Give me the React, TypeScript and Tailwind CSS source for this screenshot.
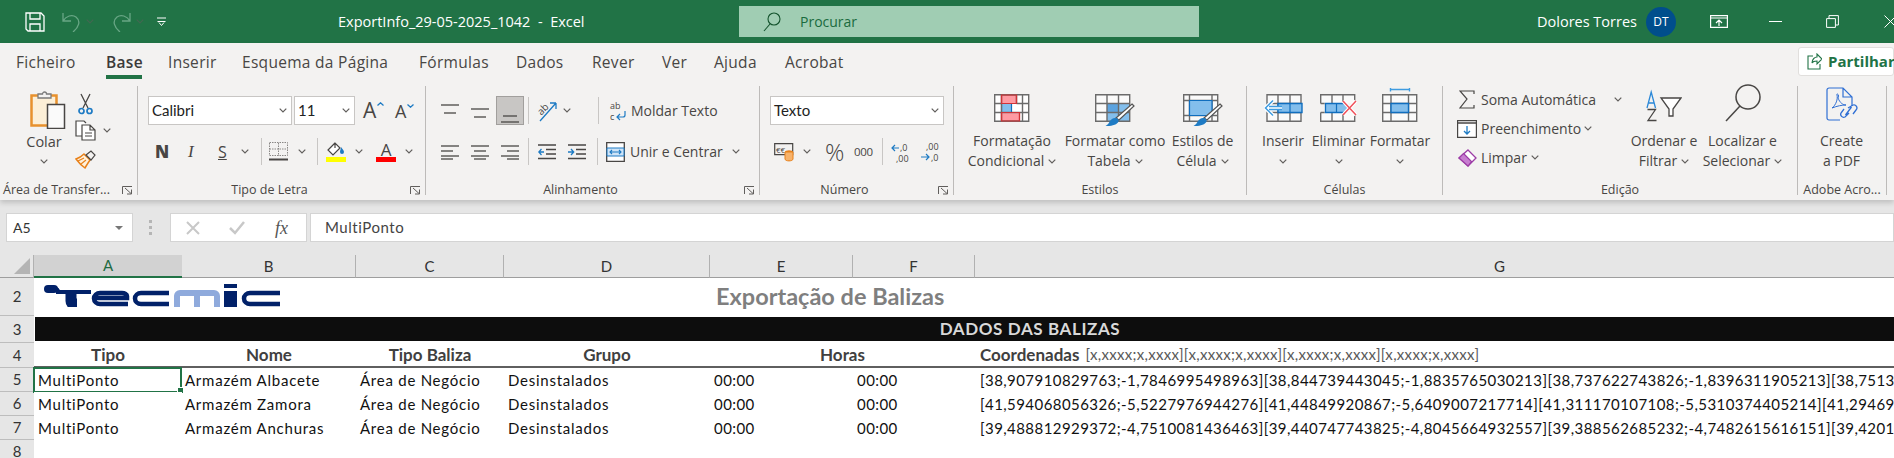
import React from 'react'

const Chev = ({ className = '' }: { className?: string }) => (
  <svg width="8" height="5" viewBox="0 0 8 5" className={`shrink-0 ${className}`}>
    <path d="M.7.7 4 4 7.3.7" fill="none" stroke="#605e5c" strokeWidth="1.2" />
  </svg>
)

const VSep = ({ className = '' }: { className?: string }) => <div className={`w-px h-[27px] bg-[#c8c6c4] shrink-0 ${className}`} />

const Launcher = () => (
  <svg width="11" height="9" viewBox="0 0 11 9">
    <path d="M.5 8V.5H10M3 2l6 5.500M9.500 3.500v4.500H5" fill="none" stroke="#605e5c" strokeWidth="1" />
  </svg>
)

function Group({ className, label, launcher, children }: { className: string; label: string; launcher?: boolean; children: React.ReactNode }) {
  return (
    <div className={`${className} shrink-0 h-[109px] border-r border-[#bdbbb9] flex flex-col`}>
      <div className="flex-1 min-h-0">{children}</div>
      <div className="flex items-center h-[15px] pt-[5px] text-[12.5px] text-[#484644] leading-none">
        <span className="flex-1 text-center whitespace-nowrap">{label}</span>
        {launcher && <span className="w-[24px] pl-[9px] flex"><Launcher /></span>}
      </div>
    </div>
  )
}

const Row = ({ className = '', children }: { className?: string; children: React.ReactNode }) => (
  <div className={`flex items-center h-[29px] ${className}`}>{children}</div>
)

function Combo({ className, text }: { className: string; text: string }) {
  return (
    <div className={`${className} h-[29px] shrink-0 bg-white border border-[#c8c6c4] flex items-center justify-between pl-[3px] pr-[4px] font-['Lato',sans-serif] text-[15px] text-[#222]`}>
      <span>{text}</span>
      <Chev />
    </div>
  )
}

function BigBtn({ className, icon, l1, l2, chevInline }: { className: string; icon: React.ReactNode; l1: string; l2?: string; chevInline?: boolean }) {
  return (
    <div className={`${className} shrink-0 flex flex-col items-center text-[14px] text-[#484644] whitespace-nowrap`}>
      <div className="h-[45px] pb-[9px] flex items-end justify-center">{icon}</div>
      <div className="h-[20px] leading-[20px]">{l1}</div>
      <div className="h-[20px] leading-[20px] flex items-center gap-[4px]">
        {l2}
        {chevInline && <Chev />}
      </div>
    </div>
  )
}

const lines = (ys: number[], cls: number[][], w = 18, stroke = '#484644') => (
  <svg width={w} height="16" viewBox={`0 0 ${w} 16`}>
    {ys.map((y, i) => (
      <path key={i} d={`M${cls[i][0]} ${y}H${cls[i][1]}`} stroke={stroke} strokeWidth="1.3" />
    ))}
  </svg>
)

const CF = () => (
  <svg width="36" height="28" viewBox="0 0 36 28">
    <path fill="#fff" d="M.7.7h34v26.6H.7z" />
    <path d="M7.5 1h15v8.5h-15zM7.5 18.5h18v8.5h-18z" fill="#ff9aa2" stroke="#d13438" strokeWidth="1.2" />
    <path d="M7.5 9.5h10v9h-10z" fill="#83beec" stroke="#106ebe" strokeWidth="1.2" />
    <path d="M.7.7h34v26.6H.7zM.7 9.5h7M.7 18.5h34M22.5 1v8M28.5 1v26M7.5 1v26M22.5 9.5h12" fill="none" stroke="#6b6b6b" strokeWidth="1.4" />
    <path d="M7.5 1h15v8.5h-15zM7.5 18.5h18v8.5h-18z" fill="none" stroke="#d13438" strokeWidth="1.2" />
  </svg>
)

const BrushOver = () => (
  <g>
    <path d="M37 10 39 12 24 26 21 24z" fill="#fff" stroke="#555" strokeWidth="1.2" />
    <path d="M20 24c3 0 4 2 3.500 3.500-1 3-7 5-13 4.500 3-1.500 3-3 4.500-5 1.500-2 3-3 5-3z" fill="#1e7bc4" />
  </g>
)

const TableStyle = () => (
  <svg width="40" height="33" viewBox="0 0 40 33" className="-mb-[5px]">
    <path fill="#fafafa" d="M.7.7h34v26.6H.7z" />
    <path d="M12 9.500h23V27.300H12z" fill="#83beec" />
    <path d="M12 9.500h11.500v9H12z" fill="#5ba3e0" />
    <path d="M.7.7h34v26.6H.7zM.7 9.500h34M.7 18.500h34M12 1v26M23.500 1v26" fill="none" stroke="#6b6b6b" strokeWidth="1.4" />
    <BrushOver />
  </svg>
)

const CellStyle = () => (
  <svg width="40" height="33" viewBox="0 0 40 33" className="-mb-[5px]">
    <path fill="#fafafa" d="M.7.7h34v26.6H.7z" />
    <path d="M.7.7h34v26.6H.7zM.7 6.500h34M.7 21.500h34M6.500 1v26M29 1v26" fill="none" stroke="#6b6b6b" strokeWidth="1.4" />
    <path d="M6.500 6.500H29v15H6.500z" fill="#83beec" stroke="#106ebe" strokeWidth="1.2" />
    <BrushOver />
  </svg>
)

const InsertIc = () => (
  <svg width="39" height="28" viewBox="0 0 39 28">
    <path fill="#fafafa" d="M3 .7h34v26.600H3z" />
    <path d="M3 .7h34v26.600H3zM14 1v26M26 1v26M3 9.500h34M3 18.500h34" fill="none" stroke="#6b6b6b" strokeWidth="1.4" />
    <path d="M14 9.500h24v9H14z" fill="#83beec" stroke="#106ebe" strokeWidth="1.400" />
    <path d="M26 9.500v9" stroke="#106ebe" strokeWidth="1.200" />
    <path d="M18 14H2M9 6.500 1.500 14 9 21.500" fill="none" stroke="#fff" strokeWidth="4" />
    <path d="M18 12.500H5M18 15.500H5M9 6.500 1.500 14 9 21.500" fill="none" stroke="#3e9be0" strokeWidth="1.500" />
  </svg>
)

const DeleteIc = () => (
  <svg width="38" height="28" viewBox="0 0 38 28">
    <path fill="#fafafa" d="M.7.7h34v8.800H.7zM.7 18.500h34v8.800H.7z" />
    <path d="M.7 9.500V.7h34v8.800M.7 18.500v8.800h34v-8.800M12 1v8M23 1v8M12 19v8M23 19v8M.7 9.500h4M.7 18.500h4" fill="none" stroke="#6b6b6b" strokeWidth="1.400" />
    <path d="M5.500 9.500h20l5 4.500-5 4.500h-20z" fill="#83beec" stroke="#106ebe" strokeWidth="1.300" />
    <path d="M16.500 9.500v9" stroke="#106ebe" strokeWidth="1.200" />
    <path d="M23 7 36 21M36 7 23 21" stroke="#fff" strokeWidth="3.500" />
    <path d="M23 7 36 21M36 7 23 21" stroke="#f0505a" strokeWidth="1.500" />
  </svg>
)

const FormatIc = () => (
  <svg width="36" height="34" viewBox="0 0 36 34">
    <path d="M8.500 1.500h19M8.500 0v3.500M27.500 0v3.500" fill="none" stroke="#3e9be0" strokeWidth="1.400" />
    <path fill="#fafafa" d="M.7 6.700h34v26.600H.7z" />
    <path d="M.7 6.700h34v26.600H.7zM.7 15.500h34M.7 24.500h34M9 7v26M26.500 7v26" fill="none" stroke="#6b6b6b" strokeWidth="1.400" />
    <path d="M9 15.500h17.500v9H9z" fill="#83beec" stroke="#106ebe" strokeWidth="1.400" />
  </svg>
)

const SortIc = () => (
  <svg width="36" height="34" viewBox="0 0 36 34">
    <path d="M1 20 5.200 4 9.500 20M2.500 15h6" fill="none" stroke="#2b88d8" strokeWidth="1.300" />
    <path d="M1.500 21.500h8L2 32.500h8.500" fill="none" stroke="#484644" strokeWidth="1.300" />
    <path d="M15 10h20l-8 11v7h-4v-7z" fill="#fff" stroke="#484644" strokeWidth="1.300" />
  </svg>
)

const FindIc = () => (
  <svg width="36" height="38" viewBox="0 0 36 38">
    <circle cx="23" cy="13" r="12" fill="none" stroke="#484644" strokeWidth="1.500" />
    <path d="M15 22 1 37" stroke="#484644" strokeWidth="1.500" />
  </svg>
)

const PdfIc = () => (
  <svg width="32" height="35" viewBox="0 0 32 35">
    <path d="M14 33H3a2 2 0 0 1-2-2V3a2 2 0 0 1 2-2h14l9 9v9M17 1v9h9" fill="none" stroke="#2f6fd4" strokeWidth="1.200" />
    <path d="M6 21c4-3 6-9 5-13-1-2 3-1 1 3 2 5 5 7 8 7-4 0-9 1-14 3z" fill="none" stroke="#2f6fd4" strokeWidth="1" />
    <path d="M22 21l5-3a3 3 0 0 1 3 5l-3 4M23 26l-4 4a3 3 0 0 1-4-4l3-4M19.500 28l6-8" fill="none" stroke="#2f6fd4" strokeWidth="1.300" />
  </svg>
)

const Logo = () => (
  <svg width="236" height="23" viewBox="0 0 236 23" className="mt-[6px] ml-[10px]">
    <path d="M4 5h7q3 0 3 3h33" fill="none" stroke="#012169" strokeWidth="4" />
    <path d="M4 5h6" fill="none" stroke="#012169" strokeWidth="8" strokeLinecap="round" />
    <path d="M27 8v9q0 3 3 3h3" fill="none" stroke="#012169" strokeWidth="11" />
    <path d="M84 20H56a6 5.500 0 0 1 0-11H78a5 3 0 0 1 5 3v2H52" fill="none" stroke="#012169" strokeWidth="4.500" />
    <path d="M125 20H97a6 5.500 0 0 1 0-11H125" fill="none" stroke="#012169" strokeWidth="4.500" />
    <path d="M133 23V12a3 3 0 0 1 3-3H170a3 3 0 0 1 3 3V23M153 9V23" fill="none" stroke="#8faadc" strokeWidth="6" />
    <path d="M180 7h13v16h-13zM180 0h13v4h-13z" fill="#012169" />
    <path d="M236 20H206a6 5.500 0 0 1 0-11H236" fill="none" stroke="#012169" strokeWidth="4.500" />
  </svg>
)

const tabs = [
  ['Ficheiro', 'ml-[16px] w-[59px]'],
  ['Base', 'ml-[31px] w-[36px]'],
  ['Inserir', 'ml-[26px] w-[48px]'],
  ['Esquema da Página', 'ml-[26px] w-[151px]'],
  ['Fórmulas', 'ml-[26px] w-[71px]'],
  ['Dados', 'ml-[26px] w-[50px]'],
  ['Rever', 'ml-[26px] w-[44px]'],
  ['Ver', 'ml-[26px] w-[27px]'],
  ['Ajuda', 'ml-[25px] w-[46px]'],
  ['Acrobat', 'ml-[25px] w-[60px]'],
]

const rows = [
  {
    n: '5',
    a: 'Armazém Albacete',
    g: '[38,907910829763;-1,7846995498963][38,844739443045;-1,8835765030213][38,737622743826;-1,8396311905213][38,751357',
  },
  {
    n: '6',
    a: 'Armazém Zamora',
    g: '[41,594068056326;-5,5227976944276][41,44849920867;-5,6409007217714][41,311170107108;-5,5310374405214][41,2946907',
  },
  {
    n: '7',
    a: 'Armazém Anchuras',
    g: '[39,488812929372;-4,7510081436463][39,440747743825;-4,8045664932557][39,388562685232;-4,7482615616151][39,420147',
  },
]

const colHead = 'bg-[#e6e6e6] border-r border-b border-r-[#b1b1b1] border-b-[#9e9e9e] flex items-center justify-center text-[15px] text-[#333]'
const rowHead = 'bg-[#e6e6e6] border-b border-[#bdbdbd] flex items-center justify-center text-[15px] text-[#333]'
const th = 'bg-white border-b-2 border-[#5f5f5f] flex items-center justify-center font-bold text-[17px] text-[#404040]'
const td = 'bg-white flex items-center text-[15px] text-[#111] whitespace-nowrap tracking-[.75px]'
const tdNum = 'bg-white flex items-center text-[15px] text-[#111] whitespace-nowrap tracking-[.43px]'

export default function App() {
  return (
    <div className="w-[1894px] h-[458px] overflow-hidden bg-[#e6e6e6] font-['Open_Sans',sans-serif]">
      {/* title bar */}
      <div className="h-[43px] bg-[#217346] flex items-center text-white">
        <svg width="20" height="20" viewBox="0 0 20 20" className="ml-[25px] shrink-0">
          <path d="M1 1h15l3 3v15H3l-2-2zM5 1v6h10V1M5 19v-7h10v7" fill="none" stroke="#fff" strokeWidth="1.300" />
        </svg>
        <svg width="24" height="20" viewBox="0 0 24 20" className="ml-[15px] shrink-0">
          <path d="M3 1v8h8M3 9c3-5 9-7 13-4 5 4 3 10-3 15" fill="none" stroke="#68a685" strokeWidth="1.300" />
        </svg>
        <Chev className="ml-[2px] opacity-50" />
        <svg width="24" height="20" viewBox="0 0 24 20" className="ml-[15px] shrink-0">
          <path d="M21 1v8h-8M21 9c-3-5-9-7-13-4-5 4-3 10 3 15" fill="none" stroke="#68a685" strokeWidth="1.300" />
        </svg>
        <Chev className="ml-[3px] opacity-50" />
        <svg width="9" height="10" viewBox="0 0 9 10" className="ml-[13px] shrink-0">
          <path d="M0 1h9" stroke="#fff" />
          <path d="M.5 4.500h8M2 5.500l2.500 3 2.500-3" fill="none" stroke="#fff" />
        </svg>
        <span className="ml-[172px] w-[243px] text-[14.5px] whitespace-pre shrink-0">ExportInfo_29-05-2025_1042  -  Excel</span>
        <div className="ml-[158px] w-[460px] h-[31px] bg-[#a0cdb3] flex items-center shrink-0">
          <svg width="18" height="20" viewBox="0 0 18 20" className="ml-[24px] shrink-0">
            <circle cx="11" cy="7" r="6" fill="none" stroke="#14532d" strokeWidth="1.100" />
            <path d="M7 12 1 19" stroke="#14532d" strokeWidth="1.100" />
          </svg>
          <span className="ml-[19px] text-[14px] text-[#1a6b3e]">Procurar</span>
        </div>
        <span className="ml-[338px] w-[97px] text-[14.5px] whitespace-nowrap shrink-0">Dolores Torres</span>
        <div className="ml-[12px] w-[30px] h-[30px] rounded-full bg-[#004e8c] flex items-center justify-center text-[12px] shrink-0">DT</div>
        <svg width="18" height="13" viewBox="0 0 18 13" className="ml-[34px] shrink-0">
          <path d="M.6.600h16.800v11.800H.6zM.6 3h16.800M9 11V5M6 8l3-3 3 3" fill="none" stroke="#fff" strokeWidth="1.200" />
        </svg>
        <div className="ml-[41px] w-[13px] h-px bg-white shrink-0" />
        <svg width="13" height="13" viewBox="0 0 13 13" className="ml-[44px] shrink-0">
          <path d="M.6 3.600h8.800v8.800H.6zM3 3.500V.6h9.400V10H9.500" fill="none" stroke="#fff" strokeWidth="1" />
        </svg>
        <svg width="13" height="13" viewBox="0 0 13 13" className="ml-[45px] shrink-0">
          <path d="M.5.500l12 12M12.500.500l-12 12" fill="none" stroke="#fff" strokeWidth="1" />
        </svg>
      </div>

      {/* ribbon */}
      <div className="h-[157px] bg-[#f3f2f1] shadow-[0_3px_5px_rgba(0,0,0,.16)] text-[#484644]">
        <div className="h-[43px] flex items-start justify-between">
          <div className="flex items-start pt-[9px]">
            {tabs.map(([t, m]) => (
              <span
                key={t}
                className={`${m} shrink-0 whitespace-nowrap text-[15.5px] tracking-[.3px] leading-[20px] h-[27px] ${t === 'Base' ? 'font-semibold text-[#3b3a39] border-b-[4px] border-[#217346]' : ''}`}
              >
                {t}
              </span>
            ))}
          </div>
          <div className="mt-[4px] w-[96px] h-[29px] shrink-0 bg-white border border-[#e1dfdd] rounded-[3px] flex items-center">
            <svg width="15" height="17" viewBox="0 0 15 17" className="ml-[8px] shrink-0">
              <path d="M6 3H1v13h12v-5M5 10c0-4 3-6 5-6V1l5 5-5 5V8c-2 0-4 0-5 2z" fill="none" stroke="#217346" strokeWidth="1.100" />
            </svg>
            <span className="ml-[6px] text-[15px] font-bold text-[#217346]">Partilhar</span>
          </div>
        </div>

        <div className="flex">
          {/* clipboard */}
          <Group className="w-[138px]" label="Área de Transfer..." launcher>
            <div className="flex">
              <div className="ml-[14px] w-[60px] flex flex-col items-center text-[14.5px] text-[#484644]">
                <svg width="36" height="39" viewBox="0 0 36 39" className="mt-[4px] ml-[8px] shrink-0">
                  <path d="M1.500 5.500h25v30h-25z" fill="#fcefd7" stroke="#e8912d" strokeWidth="2.500" />
                  <path d="M8 8V4h4.500a2 2 0 0 1 4 0H21v4z" fill="#f3f2f1" stroke="#7a7a7a" strokeWidth="1.300" />
                  <path d="M17.500 14.500h17v24h-17z" fill="#fafafa" stroke="#484644" strokeWidth="1.500" />
                </svg>
                <span className="mt-[3px] leading-[20px]">Colar</span>
                <Chev className="mt-[7px]" />
              </div>
              <div className="flex flex-col">
                <Row className="h-[29px] pl-[4px]">
                  <svg width="15" height="22" viewBox="0 0 15 22" className="mt-[6px]">
                    <path d="M3 1 10 15M12 1 5 15" fill="none" stroke="#484644" strokeWidth="1.300" />
                    <circle cx="3.500" cy="18" r="2.500" fill="none" stroke="#1e7bc4" strokeWidth="1.700" />
                    <circle cx="11.500" cy="18" r="2.500" fill="none" stroke="#1e7bc4" strokeWidth="1.700" />
                  </svg>
                </Row>
                <Row className="h-[30px] pl-[1px]">
                  <svg width="21" height="21" viewBox="0 0 21 21">
                    <path d="M7 16H1V1h8l2 2" fill="#fff" stroke="#484644" strokeWidth="1.200" />
                    <path d="M7 5h8l5 5v10H7zM15 5v5h5M10 13h7M10 16h7" fill="#fff" stroke="#484644" strokeWidth="1.200" />
                  </svg>
                  <Chev className="ml-[7px]" />
                </Row>
                <Row className="pl-[1px]">
                  <svg width="21" height="19" viewBox="0 0 21 19">
                    <path d="M1 9c3-1 6-3 8-5l6 6c-2 3-4 6-5 8-3-2-6-5-9-9z" fill="#fff1dc" stroke="#e8811a" strokeWidth="1.500" />
                    <path d="M3 11l6-3M6 14l5-4" stroke="#e8811a" strokeWidth="1.200" />
                    <path d="M11 5l5-4 4 4-4 5z" fill="#f3f2f1" stroke="#484644" strokeWidth="1.200" />
                  </svg>
                </Row>
              </div>
            </div>
          </Group>

          {/* font */}
          <Group className="w-[288px]" label="Tipo de Letra" launcher>
            <Row className="mt-[10px]">
              <Combo className="ml-[10px] w-[144px]" text="Calibri" />
              <Combo className="ml-[2px] w-[61px]" text="11" />
              <span className="ml-[8px] w-[21px] text-[21px] leading-none relative">
                A<svg width="7" height="4" viewBox="0 0 7 4" className="absolute top-[2px] right-0"><path d="M.5 3.500 3.500.8l3 2.700" fill="none" stroke="#1e7bc4" strokeWidth="1.300" /></svg>
              </span>
              <span className="ml-[11px] w-[17px] text-[18px] leading-none relative">
                A<svg width="7" height="4" viewBox="0 0 7 4" className="absolute top-[2px] -right-[2px]"><path d="M.5.500l3 2.700 3-2.700" fill="none" stroke="#1e7bc4" strokeWidth="1.300" /></svg>
              </span>
            </Row>
            <Row className="mt-[12px]">
              <span className="ml-[17px] w-[13px] text-[17px] font-extrabold leading-none">N</span>
              <span className="ml-[20px] w-[8px] text-[17px] italic font-['Liberation_Serif',serif] leading-none">I</span>
              <span className="ml-[22px] w-[8px] text-[16px] underline leading-none">S</span>
              <Chev className="ml-[15px]" />
              <VSep className="ml-[12px]" />
              <svg width="19" height="19" viewBox="0 0 19 19" className="ml-[7px]">
                <path d="M.5.500h18v13H.500zM.5 7h18M9.500 1v13" fill="none" stroke="#8a8886" strokeWidth="1" strokeDasharray="1.500 1" />
                <path d="M0 17.500h19" stroke="#484644" strokeWidth="2" />
              </svg>
              <Chev className="ml-[10px]" />
              <VSep className="ml-[11px]" />
              <div className="ml-[8px] w-[20px] flex flex-col items-center">
                <svg width="20" height="15" viewBox="0 0 20 15">
                  <path d="M9 1l-7 7 5 5 7-7zM9 1v5" fill="#fff" stroke="#484644" strokeWidth="1.200" />
                  <path d="M15 5c1 2 3 3 3 5a2 2 0 0 1-4 0c0-2 1-3 1-5z" fill="#1e7bc4" />
                </svg>
                <div className="w-[20px] h-[5px] bg-[#ffff00]" />
              </div>
              <Chev className="ml-[9px]" />
              <div className="ml-[13px] w-[20px] flex flex-col items-center leading-none">
                <span className="text-[17px] h-[15px] leading-[16px]">A</span>
                <div className="w-[20px] h-[5px] bg-[#ff0000]" />
              </div>
              <Chev className="ml-[9px]" />
            </Row>
          </Group>

          {/* alignment */}
          <Group className="w-[334px]" label="Alinhamento" launcher>
            <Row className="mt-[10px]">
              <span className="ml-[15px]">{lines([2, 10], [[0, 18], [3, 15]])}</span>
              <span className="ml-[12px]">{lines([6, 14], [[0, 18], [3, 15]])}</span>
              <div className="ml-[7px] w-[28px] h-[29px] bg-[#c8c6c4] border border-[#a19f9d] flex items-center justify-center pt-[10px]">
                {lines([8, 14], [[2, 16], [0, 18]])}
              </div>
              <VSep className="ml-[4px]" />
              <svg width="20" height="22" viewBox="0 0 20 22" className="ml-[9px] overflow-visible">
                <path d="M2 21 18 3M18 3h-6M18 3v6" fill="none" stroke="#1e7bc4" strokeWidth="1.300" />
                <text x="0" y="12" fontSize="10" fill="#484644" transform="rotate(-45 6 10)">ab</text>
              </svg>
              <Chev className="ml-[5px]" />
              <VSep className="ml-[27px]" />
              <svg width="17" height="22" viewBox="0 0 17 22" className="ml-[11px] overflow-visible">
                <text x="0" y="9" fontSize="9" fill="#484644">ab</text>
                <text x="0" y="20" fontSize="9" fill="#484644">c</text>
                <path d="M15 11v4a2 2 0 0 1-2 2H7M10 14l-3 3 3 3" fill="none" stroke="#1e7bc4" strokeWidth="1.200" />
              </svg>
              <span className="ml-[4px] text-[14px] whitespace-nowrap">Moldar Texto</span>
            </Row>
            <Row className="mt-[12px]">
              <span className="ml-[15px]">{lines([2, 7, 12, 15], [[0, 18], [0, 12], [0, 18], [0, 12]])}</span>
              <span className="ml-[12px]">{lines([2, 7, 12, 15], [[0, 18], [3, 15], [0, 18], [3, 15]])}</span>
              <span className="ml-[12px]">{lines([2, 7, 12, 15], [[0, 18], [6, 18], [0, 18], [6, 18]])}</span>
              <VSep className="ml-[9px]" />
              <svg width="18" height="16" viewBox="0 0 18 16" className="ml-[9px]">
                <path d="M0 1h18M8 5.500h10M8 10h10M0 14.500h18" stroke="#484644" strokeWidth="1.300" />
                <path d="M6 8H1M3.500 5 .8 8l2.700 3" fill="none" stroke="#1e7bc4" strokeWidth="1.300" />
              </svg>
              <svg width="18" height="16" viewBox="0 0 18 16" className="ml-[12px]">
                <path d="M0 1h18M8 5.500h10M8 10h10M0 14.500h18" stroke="#484644" strokeWidth="1.300" />
                <path d="M0 8h5.500M3 5l2.700 3L3 11" fill="none" stroke="#1e7bc4" strokeWidth="1.300" />
              </svg>
              <VSep className="ml-[11px]" />
              <svg width="19" height="20" viewBox="0 0 19 20" className="ml-[8px]">
                <path d="M.7.700h17.600v18.600H.700z" fill="#fff" stroke="#484644" strokeWidth="1.300" />
                <path d="M1 6h17v8H1z" fill="#cfe4f7" stroke="#1e7bc4" strokeWidth="1" />
                <path d="M4 10h11M6 8l-2 2 2 2M13 8l2 2-2 2" fill="none" stroke="#1e7bc4" strokeWidth="1.100" />
              </svg>
              <span className="ml-[5px] text-[14px] whitespace-nowrap w-[91px]">Unir e Centrar</span>
              <Chev className="ml-[11px]" />
            </Row>
          </Group>

          {/* number */}
          <Group className="w-[194px]" label="Número" launcher>
            <Row className="mt-[10px]">
              <Combo className="ml-[10px] w-[174px]" text="Texto" />
            </Row>
            <Row className="mt-[12px]">
              <svg width="20" height="18" viewBox="0 0 20 18" className="ml-[14px] overflow-visible">
                <path d="M.7.700h18v11H.700z" fill="#f3f2f1" stroke="#484644" strokeWidth="1.200" />
                <text x="2" y="10" fontSize="8" fill="#484644">€€</text>
                <ellipse cx="15" cy="9" rx="4" ry="1.800" fill="#e8811a" />
                <path d="M11 9v7c0 2.500 8 2.500 8 0V9z" fill="#f7b26a" stroke="#e8811a" strokeWidth="1" />
              </svg>
              <Chev className="ml-[9px]" />
              <span className="ml-[14px] w-[18px] text-[24px] font-light leading-none">%</span>
              <span className="ml-[11px] w-[20px] text-[11.5px] leading-none tracking-[-.3px]">000</span>
              <VSep className="ml-[8px]" />
              <svg width="19" height="20" viewBox="0 0 19 20" className="ml-[8px] overflow-visible">
                <path d="M8 6H1M4 3 1 6l3 3" fill="none" stroke="#1e7bc4" strokeWidth="1.200" />
                <text x="9" y="9" fontSize="9" fill="#484644">,0</text>
                <text x="5" y="20" fontSize="9" fill="#484644">,00</text>
              </svg>
              <svg width="19" height="20" viewBox="0 0 19 20" className="ml-[11px] overflow-visible">
                <text x="5" y="8" fontSize="9" fill="#484644">,00</text>
                <path d="M0 15h8M5 12l3 3-3 3" fill="none" stroke="#1e7bc4" strokeWidth="1.200" />
                <text x="10" y="19" fontSize="9" fill="#484644">,0</text>
              </svg>
            </Row>
          </Group>

          {/* styles */}
          <Group className="w-[293px]" label="Estilos">
            <div className="flex">
              <BigBtn className="ml-[12px] w-[92px]" icon={<CF />} l1="Formatação" l2="Condicional" chevInline />
              <BigBtn className="ml-[6px] w-[102px]" icon={<TableStyle />} l1="Formatar como" l2="Tabela" chevInline />
              <BigBtn className="ml-[5px] w-[63px]" icon={<CellStyle />} l1="Estilos de" l2="Célula" chevInline />
            </div>
          </Group>

          {/* cells */}
          <Group className="w-[196px]" label="Células">
            <div className="flex">
              <BigBtn className="ml-[16px] w-[40px]" icon={<InsertIc />} l1="Inserir" chevInline />
              <BigBtn className="ml-[9px] w-[53px]" icon={<DeleteIc />} l1="Eliminar" chevInline />
              <BigBtn className="ml-[5px] w-[60px]" icon={<FormatIc />} l1="Formatar" chevInline />
            </div>
          </Group>

          {/* editing */}
          <Group className="w-[355px]" label="Edição">
            <div className="flex">
              <div className="w-[182px] shrink-0 -mt-[1px] pl-[14px] text-[14px] whitespace-nowrap">
                <Row>
                  <svg width="16" height="19" viewBox="0 0 16 19" className="ml-[2px]">
                    <path d="M15 4V1H1l7 8-7 9h14v-3" fill="none" stroke="#484644" strokeWidth="1.200" />
                  </svg>
                  <span className="ml-[6px] w-[118px]">Soma Automática</span>
                  <Chev className="ml-[15px]" />
                </Row>
                <Row>
                  <svg width="20" height="18" viewBox="0 0 20 18">
                    <path d="M.6.600h18.800v16.800H.600z" fill="#fff" stroke="#484644" strokeWidth="1.200" />
                    <path d="M1 3h18" stroke="#484644" strokeWidth="1.500" />
                    <path d="M10 6v8M7 11l3 3 3-3" fill="none" stroke="#1e7bc4" strokeWidth="1.300" />
                  </svg>
                  <span className="ml-[4px] w-[99px]">Preenchimento</span>
                  <Chev className="ml-[4px]" />
                </Row>
                <Row>
                  <svg width="20" height="18" viewBox="0 0 20 18">
                    <path d="M11 1l8 8-8 8-9-8z" fill="#fff" stroke="#9c3ca6" strokeWidth="1.300" />
                    <path d="M6.500 4.500l8 8L11 17 2 9z" fill="#c77ed0" stroke="#9c3ca6" strokeWidth="1.200" />
                  </svg>
                  <span className="ml-[4px] w-[46px]">Limpar</span>
                  <Chev className="ml-[4px]" />
                </Row>
              </div>
              <BigBtn className="ml-[6px] w-[66px]" icon={<SortIc />} l1="Ordenar e" l2="Filtrar" chevInline />
              <BigBtn className="ml-[5px] w-[81px]" icon={<FindIc />} l1="Localizar e" l2="Selecionar" chevInline />
            </div>
          </Group>

          {/* adobe */}
          <Group className="w-[89px]" label="Adobe Acro...">
            <BigBtn className="ml-[22px] w-[43px]" icon={<PdfIc />} l1="Create" l2="a PDF" />
          </Group>
        </div>
      </div>

      {/* formula bar */}
      <div className="mt-[13px] h-[29px] flex items-stretch">
        <div className="ml-[6px] w-[127px] bg-white border border-[#d4d4d4] flex items-center justify-between pl-[6px] pr-[9px] text-[14px] text-[#333] font-['Lato',sans-serif]">
          A5
          <span className="w-0 h-0 border-x-[4px] border-x-transparent border-t-[4px] border-t-[#777]" />
        </div>
        <div className="ml-[16px] w-[3px] flex flex-col justify-center gap-[3px]">
          <span className="h-[3px] bg-[#b5b5b5]" />
          <span className="h-[3px] bg-[#b5b5b5]" />
          <span className="h-[3px] bg-[#b5b5b5]" />
        </div>
        <div className="ml-[18px] w-[137px] bg-white border border-[#d4d4d4] flex items-center">
          <svg width="14" height="14" viewBox="0 0 14 14" className="ml-[15px]">
            <path d="M1 1l12 12M13 1 1 13" stroke="#c8c8c8" strokeWidth="2" />
          </svg>
          <svg width="16" height="14" viewBox="0 0 16 14" className="ml-[29px]">
            <path d="M1 7l5 5L15 1" fill="none" stroke="#c8c8c8" strokeWidth="2.500" />
          </svg>
          <span className="ml-[30px] font-['Liberation_Serif',serif] italic text-[18px] text-[#555] leading-none">fx</span>
        </div>
        <div className="ml-[3px] flex-1 bg-white border border-[#d4d4d4] flex items-center pl-[14px] font-['Lato',sans-serif] text-[15px] tracking-[.55px] text-[#444]">
          MultiPonto
        </div>
      </div>

      {/* sheet */}
      <div className="mt-[13px] w-[2025px] grid grid-cols-[34px_148px_174px_148px_206px_143px_122px_1050px] grid-rows-[23px_38px_27px_25px_24px_24px_24px_18px] font-['Lato',sans-serif]">
        <div className="bg-[#e6e6e6] border-r border-b border-r-[#b1b1b1] border-b-[#9e9e9e] flex items-end justify-end pr-[3px] pb-[3px]">
          <div className="w-0 h-0 border-l-[16px] border-l-transparent border-b-[16px] border-b-[#b4b4b4]" />
        </div>
        <div className="bg-[#d2d2d2] border-b-2 border-[#217346] flex items-center justify-center text-[15px] text-[#1f6b42]">A</div>
        {['B', 'C', 'D', 'E', 'F', 'G'].map((c) => (
          <div key={c} className={colHead}>{c}</div>
        ))}

        <div className={rowHead}>2</div>
        <div className="bg-white col-span-3 overflow-visible"><Logo /></div>
        <div className="bg-white" />
        <div className="bg-white col-span-3 flex items-center pl-[6px] text-[23.5px] font-bold text-[#7f7f7f] whitespace-nowrap">
          Exportação de Balizas
        </div>

        <div className={rowHead}>3</div>
        <div className="bg-white col-span-7 py-px pl-px">
          <div className="h-[24px] bg-[#0d0d0d] flex items-center justify-center text-[17px] font-bold text-[#d9d9d9] tracking-[.6px]">DADOS DAS BALIZAS</div>
        </div>

        <div className={rowHead}>4</div>
        <div className={th}>Tipo</div>
        <div className={th}>Nome</div>
        <div className={th}>Tipo Baliza</div>
        <div className={th}>Grupo</div>
        <div className={`${th} col-span-2`}>Horas</div>
        <div className={`${th} justify-start pl-[5px]`}>
          Coordenadas
          <span className="ml-[6px] font-normal text-[15px] text-[#595959] tracking-[.3px]">[x,xxxx;x,xxxx][x,xxxx;x,xxxx][x,xxxx;x,xxxx][x,xxxx;x,xxxx]</span>
        </div>

        {rows.map((r, i) => (
          <React.Fragment key={r.n}>
            <div className={`${rowHead} ${i === 0 ? 'bg-[#d2d2d2] text-[#1f6b42]' : ''}`}>{r.n}</div>
            <div className={`${td} pl-[4px] relative`}>
              MultiPonto
              {i === 0 && (
                <>
                  <div className="absolute -top-[1px] -bottom-[1px] -left-[1px] right-0 border-2 border-[#217346]" />
                  <div className="absolute -bottom-[2px] -right-[2px] w-[5px] h-[5px] bg-[#217346] border border-white box-content" />
                </>
              )}
            </div>
            <div className={`${td} pl-[3px]`}>{r.a}</div>
            <div className={`${td} pl-[4px]`}>Área de Negócio</div>
            <div className={`${td} pl-[4px]`}>Desinstalados</div>
            <div className={`${tdNum} pl-[4px]`}>00:00</div>
            <div className={`${tdNum} pl-[4px]`}>00:00</div>
            <div className={`${tdNum} pl-[5px]`}>{r.g}</div>
          </React.Fragment>
        ))}

        <div className={`${rowHead} border-b-0 items-start`}>8</div>
        <div className="bg-white col-span-7" />
      </div>
    </div>
  )
}
